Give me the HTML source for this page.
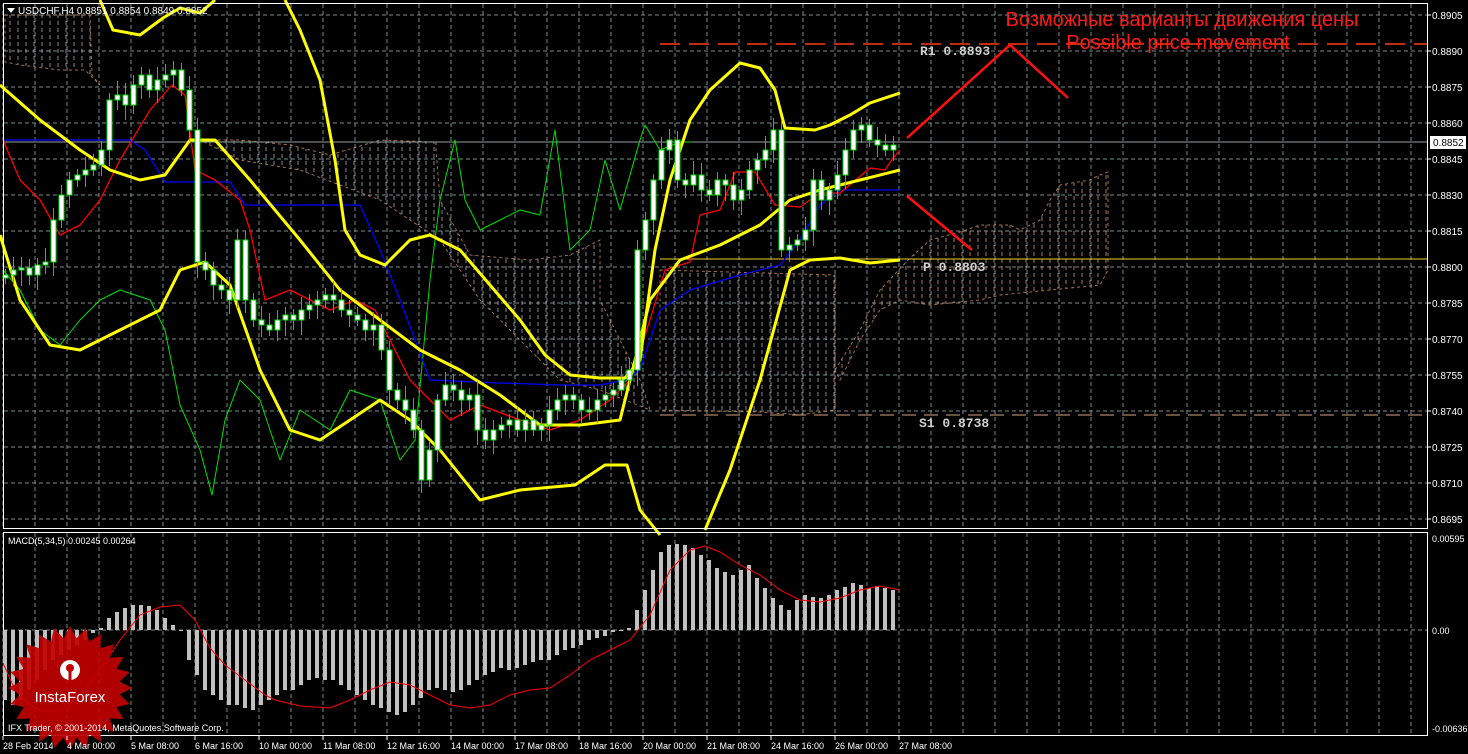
<!DOCTYPE html>
<html><head><meta charset="utf-8"><style>
html,body{margin:0;padding:0;background:#000;width:1468px;height:754px;overflow:hidden}
svg{display:block}
text{font-family:"Liberation Sans",sans-serif}
text.mono{font-family:"Liberation Mono",monospace;font-weight:bold;font-size:13px}
</style></head><body>
<svg id="s" width="1468" height="754" viewBox="0 0 1468 754" xmlns="http://www.w3.org/2000/svg">
<defs>
<pattern id="hatch" width="8" height="7" patternUnits="userSpaceOnUse"><line x1="2" y1="0" x2="2" y2="4" stroke="#c8c0c8" stroke-width="1"/></pattern>
<pattern id="hatch2" width="8" height="7" patternUnits="userSpaceOnUse"><line x1="2" y1="0" x2="2" y2="4" stroke="#e8b080" stroke-width="1"/></pattern>
</defs>
<rect width="1468" height="754" fill="#000"/>
<g id="grid" stroke="#7a8a8a" stroke-width="1" stroke-dasharray="4,3"></g>
<g opacity="0.7">
<path d="M5,15 L90,15 L92,75 L100,85 L85,70 L60,70 L20,65 L5,62Z" fill="url(#hatch)" stroke="#e8a070" stroke-dasharray="3,3"/>
<path d="M200,140 L240,140 L290,145 L330,155 L380,140 L436,142 L436,150 L440,200 L470,255 L530,260 L570,255 L600,240 L600,300 L620,340 L640,380 L650,410 L600,390 L560,380 L480,300 L440,240 L380,200 L300,170 L240,160Z" fill="url(#hatch)" stroke="#e8a070" stroke-dasharray="3,3"/>
<path d="M660,270 L835,275 L835,410 L800,415 L760,412 L660,410Z" fill="url(#hatch)" stroke="#e8a070" stroke-dasharray="3,3"/>
<path d="M835,370 L860,330 L880,290 L910,258 L930,240 L960,232 L980,225 L1010,225 L1020,230 L1040,220 L1050,200 L1060,185 L1090,180 L1100,175 L1108,172 L1108,270 L1100,285 L1050,290 L1000,295 L980,300 L930,305 L900,300 L880,310 L860,340 L840,380Z" fill="url(#hatch2)" stroke="#e8a070" stroke-dasharray="3,3"/>
</g>
<line x1="3" y1="142" x2="1428" y2="142" stroke="#8fa0a0"/>
<line x1="660" y1="44" x2="1428" y2="44" stroke="#ff3a10" stroke-width="1.5" stroke-dasharray="20,9"/>
<line x1="660" y1="259" x2="1428" y2="259" stroke="#e8d020"/>
<line x1="660" y1="415" x2="1428" y2="415" stroke="#d8a080" stroke-dasharray="14,8"/>
<text class="mono" x="920" y="55" fill="#d0d0d0">R1  0.8893</text>
<text class="mono" x="923" y="271" fill="#d0d0d0">P  0.8803</text>
<text class="mono" x="919" y="427" fill="#d0d0d0">S1  0.8738</text>
<g fill="none" stroke-linejoin="round">
<polyline stroke="#00e000" stroke-width="1" points="3,270 20,290 40,330 60,345 80,320 100,300 120,290 150,300 165,330 180,405 200,450 212,495 225,420 240,380 260,400 280,460 300,410 330,430 350,390 380,400 400,460 415,440 430,280 440,200 455,140 465,200 480,230 500,220 520,210 540,215 555,130 570,250 590,230 605,160 620,210 640,140 645,125 660,150 680,142 692,142"/>
<polyline stroke="#0000ff" stroke-width="1.3" points="3,140 110,140 130,140 145,150 165,182 230,182 245,205 300,205 360,205 380,250 400,300 430,380 500,383 560,385 600,385 625,380 640,370 660,310 690,290 740,275 780,265 800,240 820,205 840,190 900,190"/>
<polyline stroke="#ff0000" stroke-width="1.3" points="3,140 20,180 40,200 60,235 80,225 100,200 120,160 150,110 172,85 185,95 195,170 215,180 240,200 250,230 265,300 290,290 310,300 330,310 355,300 375,310 390,340 410,380 430,400 450,420 480,405 520,420 550,430 580,420 610,400 630,380 650,320 665,270 690,262 700,215 720,210 735,172 755,172 775,205 800,207 820,193 840,193 870,168 885,170 893,158 900,150"/>
<g stroke="#ffff00" stroke-width="3">
<polyline points="100,0 113,30 140,35 163,18 180,8 200,13 215,0"/>
<polyline points="285,0 300,30 320,80 335,160 345,230 360,255 385,265 410,240 430,235 460,250 490,285 520,320 545,355 570,375 600,378 625,378 640,360 655,250 670,180 690,120 710,90 740,63 760,68 775,90 785,128 815,130 830,125 850,115 870,103 900,93"/>
<polyline points="0,85 40,120 80,150 110,170 140,180 165,175 190,140 215,140 250,180 300,240 340,290 380,320 420,350 460,370 500,395 540,425 580,425 620,420 650,300 680,260 720,245 760,225 790,200 820,190 860,180 900,170"/>
<polyline points="0,235 20,300 50,345 80,350 120,330 160,310 180,270 205,262 230,285 260,370 290,430 320,440 350,420 380,400 410,420 440,450 480,500 520,490 575,485 605,465 627,465 640,510 660,535"/>
<polyline points="705,530 730,470 760,380 790,270 810,260 840,258 870,263 900,260"/>
</g>
</g>
<g id="candles"></g>
<g stroke="#ff1010" stroke-width="2.5" fill="none">
<polyline points="907,138 1010,45 1068,98"/>
<line x1="907" y1="196" x2="972" y2="250"/>
</g>
<text x="1182" y="26" fill="#ff1a1a" font-size="20" text-anchor="middle">Возможные варианты движения цены</text>
<text x="1178" y="49" fill="#ff1a1a" font-size="20" text-anchor="middle">Possible price movement</text>
<rect x="3.5" y="3.5" width="1424" height="525" fill="none" stroke="#fff"/>
<rect x="3.5" y="532.5" width="1424" height="203" fill="none" stroke="#fff"/>
<path d="M7,8 L15,8 L11,13Z" fill="#fff"/>
<text x="18" y="14" fill="#fff" font-size="10">USDCHF,H4  0.8851 0.8854 0.8849 0.8852</text>
<g id="axis" fill="#fff" font-size="10"></g>
<rect x="1430" y="136" width="36" height="13" fill="#fff"/>
<text x="1433" y="146" fill="#000" font-size="10">0.8852</text>
<g id="macd"></g>
<polyline fill="none" stroke="#ff0000" stroke-width="1" points="3,663 15,690 30,705 45,712 60,710 80,695 100,670 120,640 140,615 160,607 180,605 195,620 210,648 225,665 245,680 265,695 275,700 300,706 330,708 350,700 370,690 390,682 410,685 430,695 450,705 470,708 490,705 510,695 530,690 550,688 570,675 590,660 610,650 630,640 650,615 670,570 690,550 705,546 720,552 740,565 760,575 780,590 800,600 820,602 840,598 860,590 880,586 900,590"/>
<text x="8" y="544" fill="#fff" font-size="9">MACD(5,34,5) 0.00245 0.00264</text>
<text x="1432" y="542" fill="#fff" font-size="9">0.00595</text>
<text x="1432" y="634" fill="#fff" font-size="9">0.00</text>
<text x="1432" y="732" fill="#fff" font-size="9">-0.00636</text>
<g transform="translate(70,688)">
<polygon id="star" fill="#c00000" opacity="0.92" points=""/>
<circle cx="0" cy="-18" r="10" fill="#fff"/>
<circle cx="0" cy="-20" r="4" fill="#c00000"/>
<rect x="-1.5" y="-18" width="3" height="12" fill="#c00000"/>
<text x="0" y="14" fill="#fff" font-size="15" text-anchor="middle">InstaForex</text>
</g>
<text x="8" y="731" fill="#fff" font-size="9">IFX Trader, © 2001-2014, MetaQuotes Software Corp.</text>
<g id="dates" fill="#fff" font-size="9"></g>
</svg>
<script>
var NS="http://www.w3.org/2000/svg";
function el(p,t,a,txt){var e=document.createElementNS(NS,t);for(var k in a)e.setAttribute(k,a[k]);if(txt)e.textContent=txt;document.getElementById(p).appendChild(e);return e;}
for(var x=3;x<1428;x+=32){el('grid','line',{x1:x,y1:4,x2:x,y2:528});el('grid','line',{x1:x,y1:533,x2:x,y2:735});}
for(var y=15;y<528;y+=36)el('grid','line',{x1:4,y1:y,x2:1427,y2:y});
el('grid','line',{x1:4,y1:630,x2:1427,y2:630});
var p=0.8905;for(var y=15;y<528;y+=36){el('axis','text',{x:1432,y:y+4},p.toFixed(4));el('axis','line',{x1:1428,y1:y,x2:1431,y2:y,stroke:'#fff'});p-=0.0015;}
var c=[275,270,268,275,265,262,220,195,180,175,170,165,150,100,95,105,85,75,90,80,75,70,90,130,262,270,285,290,300,240,300,320,325,330,320,315,320,310,305,300,295,300,310,315,320,330,325,350,390,400,410,430,480,450,400,385,390,400,395,430,440,430,425,420,430,420,430,425,410,400,395,400,410,410,400,395,390,380,370,250,220,180,150,140,180,185,175,190,195,180,185,200,190,170,160,150,130,250,245,240,230,180,200,190,175,150,130,125,140,145,150,145];
var wick="",body="";
for(var i=0;i<c.length;i++){var x=5+8*i,o=i?c[i-1]:278,cl=c[i];var t=Math.min(o,cl),b=Math.max(o,cl);if(b-t<2)b=t+2;
var h=t-6-(i*7%9),l=b+6+(i*5%11);wick+="M"+(x+0.5)+","+h+"V"+l;body+="M"+(x-2)+","+t+"h5v"+(b-t)+"h-5z";}
el('candles','path',{d:wick,stroke:'#00e000','stroke-width':1,fill:'none'});
el('candles','path',{d:body,stroke:'#00e000','stroke-width':1,fill:'#fff'});
var m=[700,705,700,690,680,670,660,655,650,645,640,633,628,618,612,608,605,605,606,610,618,625,630,660,675,690,695,700,705,705,708,710,705,700,695,690,690,685,680,678,680,680,685,690,695,700,705,708,712,715,712,705,698,690,688,690,692,690,685,680,675,672,668,670,668,665,662,660,660,655,650,648,645,640,638,636,632,630,628,610,590,570,552,545,544,545,548,555,560,568,572,575,570,565,578,588,598,605,610,600,595,597,598,595,590,587,583,585,588,586,588,590];
for(var i=0;i<m.length;i++){var x=5+8*i,t=Math.min(630,m[i]),h=Math.abs(m[i]-630);el('macd','rect',{x:x-2,y:t,width:4,height:Math.max(h,1),fill:'#c0c0c0'});}
var d=["28 Feb 2014","4 Mar 00:00","5 Mar 08:00","6 Mar 16:00","10 Mar 00:00","11 Mar 08:00","12 Mar 16:00","14 Mar 00:00","17 Mar 08:00","18 Mar 16:00","20 Mar 00:00","21 Mar 08:00","24 Mar 16:00","26 Mar 00:00","27 Mar 08:00"];
for(var i=0;i<d.length;i++){var x=3+64*i;el('dates','text',{x:x,y:749},d[i]);el('dates','line',{x1:x,y1:736,x2:x,y2:740,stroke:'#fff'});}
var pts=[];for(var i=0;i<48;i++){var a=i*Math.PI/24,r=(i%2)?50:62;pts.push((r*Math.cos(a)).toFixed(1)+","+(r*Math.sin(a)).toFixed(1));}
document.getElementById('star').setAttribute('points',pts.join(' '));
</script>
</body></html>
